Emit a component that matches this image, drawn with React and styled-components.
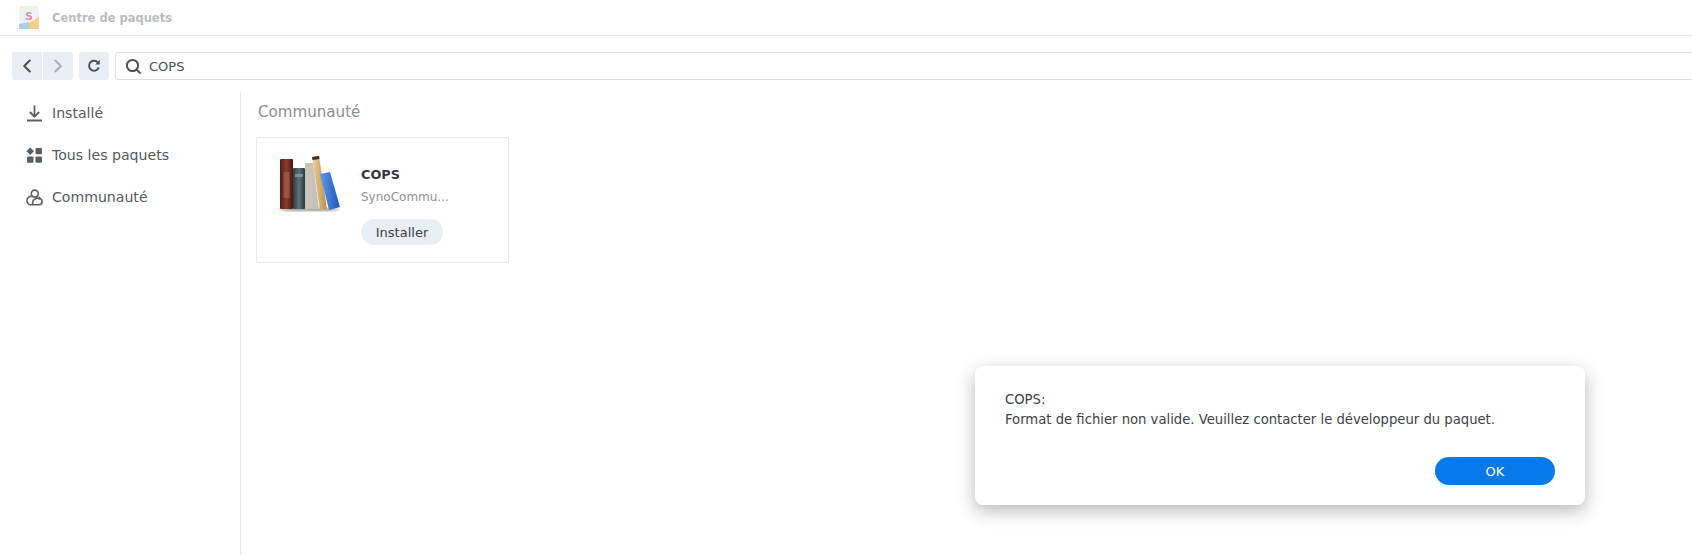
import React from "react";
import styled, { createGlobalStyle } from "styled-components";
import { ChevronLeft, ChevronRight } from "lucide-react";

const Global = createGlobalStyle`
  html, body { margin: 0; padding: 0; background: #fff; }
  body { font-family: "DejaVu Sans", Verdana, sans-serif; color: #3c4147; overflow: hidden; }
`;

const Page = styled.div`
  position: relative;
  width: 1692px;
  height: 555px;
  overflow: hidden;
`;

const TitleBar = styled.header`
  height: 36px;
  box-sizing: border-box;
  border-bottom: 1px solid #e4e6e8;
  display: flex;
  align-items: center;
  padding-left: 17px;
  gap: 11px;
`;

const Title = styled.span`
  font-size: 11.5px;
  font-weight: 700;
  color: #b9bcbf;
`;

const Toolbar = styled.div`
  display: flex;
  padding: 16px 0 0 12px;
  height: 28px;
`;

const NavButton = styled.button`
  width: ${(p) => p.$w || 30}px;
  height: 28px;
  padding: 0;
  border: 0;
  margin-right: ${(p) => p.$mr || 0}px;
  background: #e9eef4;
  border-radius: ${(p) => p.$radius || "3px"};
  display: flex;
  align-items: center;
  justify-content: center;
  color: ${(p) => (p.$off ? "#a9b1ba" : "#4a5058")};
`;

const SearchBox = styled.div`
  flex: 1;
  box-sizing: border-box;
  height: 28px;
  margin-right: -10px;
  border: 1px solid #dcdfe3;
  border-radius: 3px;
  display: flex;
  align-items: center;
  padding-left: 9px;
  gap: 7px;
  font-size: 13px;
  color: #4a4f55;
`;

const Body = styled.div`
  display: flex;
  margin-top: 12px;
  height: 463px;
`;

const Sidebar = styled.nav`
  width: 241px;
  box-sizing: border-box;
  border-right: 1px solid #e6e8ea;
  padding: 0 0 0 26px;
`;

const NavItem = styled.div`
  height: 42px;
  display: flex;
  align-items: center;
  gap: 9px;
  font-size: 14.1px;
  color: #53585e;
`;

const Content = styled.main`
  flex: 1;
  padding: 10px 0 0 15px;
`;

const SectionTitle = styled.h2`
  margin: 0 0 15px 2px;
  font-size: 15.1px;
  line-height: 20px;
  font-weight: 400;
  color: #8b8e91;
`;

const Card = styled.div`
  width: 253px;
  height: 126px;
  box-sizing: border-box;
  border: 1px solid #e8eaec;
  display: flex;
  padding: 14px 0 0 18px;
`;

const CardInfo = styled.div`
  margin-left: 20px;
  padding-top: 15px;
  display: flex;
  flex-direction: column;
  align-items: flex-start;
`;

const AppName = styled.div`
  font-size: 12.8px;
  line-height: 16px;
  font-weight: 700;
  color: #33373b;
`;

const Publisher = styled.div`
  font-size: 12px;
  line-height: 16px;
  margin-top: 6px;
  color: #8c9095;
`;

const InstallButton = styled.button`
  margin-top: 14px;
  width: 82px;
  height: 26px;
  padding: 0;
  border: 0;
  border-radius: 13px;
  background: #e9eef4;
  font: 13px "DejaVu Sans", Verdana, sans-serif;
  color: #3c4147;
`;

const Dialog = styled.div`
  position: absolute;
  left: 975px;
  top: 366px;
  width: 610px;
  height: 139px;
  box-sizing: border-box;
  background: #fff;
  border-radius: 8px;
  box-shadow: 0 6px 18px rgba(0, 0, 0, 0.28);
  padding: 24px 30px 0;
  display: flex;
  flex-direction: column;
`;

const Message = styled.p`
  margin: 0;
  font-size: 13.2px;
  line-height: 20px;
  color: #3c4147;
`;

const DialogFooter = styled.div`
  margin-top: 27px;
  display: flex;
  justify-content: flex-end;
`;

const OkButton = styled.button`
  width: 120px;
  height: 28px;
  padding: 0;
  border: 0;
  border-radius: 14px;
  background: #0779e8;
  color: #fff;
  font: 13px "DejaVu Sans", Verdana, sans-serif;
`;

const SoftSvg = styled.svg`
  flex: none;
  filter: blur(0.5px);
`;

const AppLogo = () => (
  <SoftSvg width="24" height="26" viewBox="0 0 24 26">
    <path d="M3 1h18v3H3z" fill="#f8efd9" />
    <path d="M2 4h20v20H2z" fill="#eef3f7" />
    <path d="M2 19l10-2v7H2z" fill="#a3d2ea" />
    <path d="M12 18l10-6v12H12z" fill="#f5cf86" />
    <text x="12" y="15" fontSize="11" fontWeight="700" fontFamily="DejaVu Sans" textAnchor="middle" fill="#e58aa0">S</text>
  </SoftSvg>
);

const BooksIcon = () => (
  <SoftSvg width="66" height="62" viewBox="0 0 66 62">
    <defs>
      <linearGradient id="red" x1="0" x2="1" y1="0" y2="0">
        <stop offset="0" stopColor="#4e1c14" />
        <stop offset=".5" stopColor="#8a3d2e" />
        <stop offset="1" stopColor="#45170f" />
      </linearGradient>
      <linearGradient id="teal" x1="0" x2="1" y1="0" y2="0">
        <stop offset="0" stopColor="#2a3d42" />
        <stop offset=".5" stopColor="#5b7578" />
        <stop offset="1" stopColor="#26363a" />
      </linearGradient>
      <linearGradient id="cream" x1="0" x2="1" y1="0" y2="0">
        <stop offset="0" stopColor="#ecd097" />
        <stop offset="1" stopColor="#b98f4f" />
      </linearGradient>
      <linearGradient id="blue" x1="0" x2="1" y1="0" y2="0">
        <stop offset="0" stopColor="#5b9bec" />
        <stop offset="1" stopColor="#1f55b8" />
      </linearGradient>
      <filter id="soft"><feGaussianBlur stdDeviation="0.9" /></filter>
    </defs>
    <ellipse cx="34" cy="57.5" rx="31" ry="1.6" fill="#9a9a9a" filter="url(#soft)" />
    <rect x="5" y="7" width="13" height="50" rx="1" fill="url(#red)" />
    <rect x="8.5" y="20" width="6" height="26" fill="#a2604c" opacity=".7" />
    <rect x="18" y="16" width="12" height="41" rx="1" fill="url(#teal)" />
    <rect x="20" y="22" width="8" height="3" fill="#90a5a8" opacity=".7" />
    <path d="M30 11h8l6 46H30z" fill="#c8c3ba" />
    <path d="M37 5l7-1 8 53-7 1z" fill="url(#cream)" />
    <path d="M37 5l7-1 .5 3-7 1z" fill="#3e2f1a" />
    <path d="M45 22l10-2 10 35-11 3z" fill="url(#blue)" />
  </SoftSvg>
);

const InstalledIcon = () => (
  <svg width="17" height="17" viewBox="0 0 17 17" fill="none" stroke="#5a5f66" strokeWidth="1.8">
    <path d="M8.5 0.5v11M3.8 7l4.7 4.7L13.2 7M1 15.5h15" />
  </svg>
);

const AllIcon = () => (
  <svg width="17" height="17" viewBox="0 0 17 17" fill="#5a5f66">
    <path d="M4.2 .4L8 4.2 4.2 8 .4 4.2z" />
    <rect x="9.5" y="1" width="6.5" height="6.3" rx="1" />
    <rect x="1" y="9.5" width="6.5" height="6.3" rx="1" />
    <rect x="9.5" y="9.5" width="6.5" height="6.3" rx="1" />
  </svg>
);

const CommunityIcon = () => (
  <svg width="17" height="17" viewBox="0 0 17 17" fill="none" stroke="#5a5f66" strokeWidth="1.6">
    <circle cx="8.8" cy="4.6" r="3.5" />
    <path d="M5.8 7.4A4 4 0 0 0 4.6 15.8h8.4a3.2 3.2 0 0 0 1-6.2 3 3 0 0 0-1.6-1.6" />
    <path d="M7 15.5a3.6 3.6 0 0 1 2-5.2 3.6 3.6 0 0 1 5 .2" />
  </svg>
);

const ReloadIcon = () => (
  <svg width="14" height="14" viewBox="0 0 14 14" fill="none" stroke="#4a5058" strokeWidth="2">
    <path d="M11.8 8.4A5 5 0 1 1 10.8 3.4" />
    <path d="M12.8 .8v4.6H8.2z" fill="#4a5058" stroke="none" />
  </svg>
);

const SearchIcon = () => (
  <svg width="17" height="17" viewBox="0 0 17 17" fill="none" stroke="#4a5058" strokeWidth="2">
    <circle cx="7.5" cy="7.5" r="5.6" />
    <path d="M11.6 11.6l4 4" />
  </svg>
);

export default function App() {
  return (
    <Page>
      <Global />
      <TitleBar>
        <AppLogo />
        <Title>Centre de paquets</Title>
      </TitleBar>
      <Toolbar>
        <NavButton $radius="3px 0 0 3px" $mr={1}>
          <ChevronLeft size={22} strokeWidth={2.3} />
        </NavButton>
        <NavButton $radius="0 3px 3px 0" $mr={6} $off>
          <ChevronRight size={22} strokeWidth={2.3} />
        </NavButton>
        <NavButton $mr={6}>
          <ReloadIcon />
        </NavButton>
        <SearchBox>
          <SearchIcon />
          COPS
        </SearchBox>
      </Toolbar>
      <Body>
        <Sidebar>
          <NavItem><InstalledIcon />Installé</NavItem>
          <NavItem><AllIcon />Tous les paquets</NavItem>
          <NavItem><CommunityIcon />Communauté</NavItem>
        </Sidebar>
        <Content>
          <SectionTitle>Communauté</SectionTitle>
          <Card>
            <BooksIcon />
            <CardInfo>
              <AppName>COPS</AppName>
              <Publisher>SynoCommu...</Publisher>
              <InstallButton>Installer</InstallButton>
            </CardInfo>
          </Card>
        </Content>
      </Body>
      <Dialog>
        <Message>
          COPS:
          <br />
          Format de fichier non valide. Veuillez contacter le développeur du paquet.
        </Message>
        <DialogFooter>
          <OkButton>OK</OkButton>
        </DialogFooter>
      </Dialog>
    </Page>
  );
}
